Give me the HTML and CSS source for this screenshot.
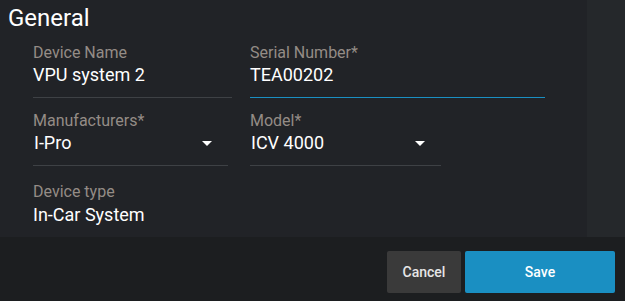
FILE: index.html
```html
<!DOCTYPE html>
<html>
<head>
<meta charset="utf-8">
<link rel="stylesheet" href="styles.css">
</head>
<body>
<div class="panel">
  <div class="main">
    <h2 class="title">General</h2>
    <div class="form">
      <div class="row">
        <div class="field w-name">
          <div class="label">Device Name</div>
          <div class="value">VPU system 2</div>
        </div>
        <div class="field w-serial focused">
          <div class="label">Serial Number*</div>
          <div class="value">TEA00202</div>
        </div>
      </div>
      <div class="row">
        <div class="field w-manu select">
          <div class="label">Manufacturers*</div>
          <div class="value">I-Pro<span class="arrow"></span></div>
        </div>
        <div class="field w-model select">
          <div class="label">Model*</div>
          <div class="value">ICV 4000<span class="arrow"></span></div>
        </div>
      </div>
      <div class="row last">
        <div class="field plain">
          <div class="label">Device type</div>
          <div class="value">In-Car System</div>
        </div>
      </div>
    </div>
  </div>
  <div class="strip"></div>
</div>
<div class="footer">
  <button class="btn cancel">Cancel</button>
  <button class="btn save">Save</button>
</div>
</body>
</html>
```
FILE: styles.css
```css
html, body {
  margin: 0;
  padding: 0;
  background: #1c1e20;
  font-family: Roboto, "Liberation Sans", sans-serif;
  overflow: hidden;
}
.panel {
  display: flex;
  height: 237px;
  background: #212327;
}
.main {
  width: 587px;
}
.strip {
  flex: 1;
  background: #25282b;
}
.title {
  margin: 0;
  padding: 3px 0 0 8px;
  font-size: 24px;
  line-height: 30px;
  font-weight: 400;
  color: #ffffff;
}
.form {
  padding: 11px 0 0 33px;
  display: flex;
  flex-direction: column;
  gap: 14px;
}
.row {
  display: flex;
  gap: 18px;
}
.row.last {
  margin-top: 3px;
}
.field {
  border-bottom: 1px solid #3e4145;
  padding-bottom: 10px;
}
.field.focused {
  border-bottom-color: #1a8fc2;
}
.field.plain {
  border-bottom: none;
}
.field.plain .value {
  margin-top: 2px;
}
.w-name { width: 199px; }
.w-serial { width: 295px; }
.w-manu { width: 195px; margin-right: 4px; }
.w-model { width: 191px; }
.label {
  font-size: 16px;
  line-height: 18px;
  color: #948c86;
}
.value {
  font-size: 18px;
  line-height: 24px;
  color: #ffffff;
  margin-top: 1px;
  display: flex;
  align-items: center;
  justify-content: space-between;
}
.field.w-manu .value, .field.w-model .value {
  padding-left: 1px;
}
.arrow {
  width: 0;
  height: 0;
  border-left: 5px solid transparent;
  border-right: 5px solid transparent;
  border-top: 5px solid #ffffff;
  margin-right: 16px;
}
.footer {
  height: 64px;
  display: flex;
  justify-content: flex-end;
  align-items: flex-start;
  gap: 4px;
  padding-right: 10px;
  box-sizing: border-box;
  padding-top: 14px;
}
.btn {
  border: none;
  border-radius: 2px;
  height: 42px;
  font-family: Roboto, "Liberation Sans", sans-serif;
  font-size: 14px;
  font-weight: 500;
  color: #ffffff;
  cursor: pointer;
}
.cancel {
  width: 74px;
  background: #3a3a3a;
  color: #e6e6e6;
}
.save {
  width: 150px;
  background: #1a8fc2;
}
```
